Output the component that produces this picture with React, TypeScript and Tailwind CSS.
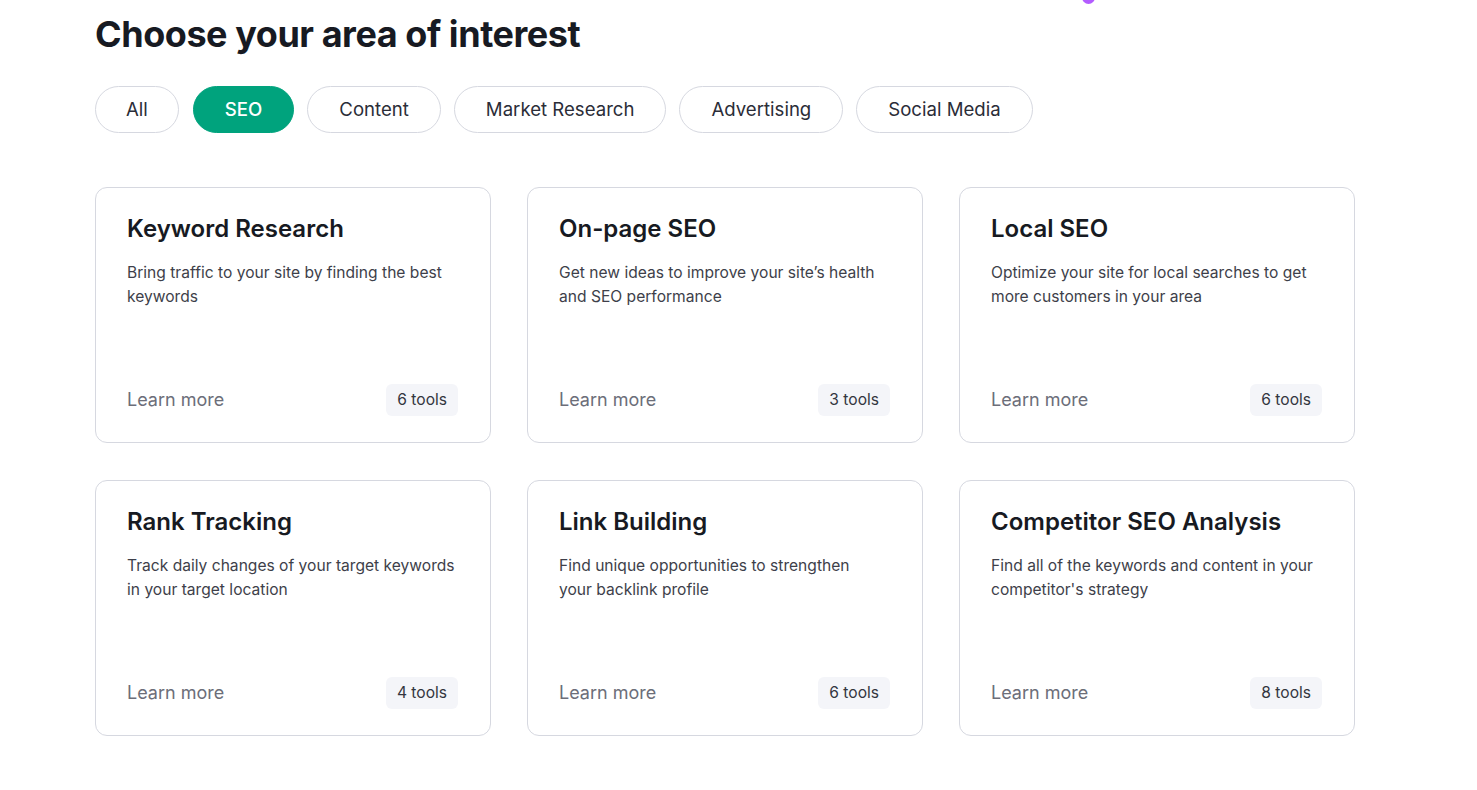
import React from "react";

const FILTERS = ["All", "SEO", "Content", "Market Research", "Advertising", "Social Media"];

const CARDS = [
  { title: "Keyword Research", lines: ["Bring traffic to your site by finding the best", "keywords"], tools: 6 },
  { title: "On-page SEO", lines: ["Get new ideas to improve your site’s health", "and SEO performance"], tools: 3 },
  { title: "Local SEO", lines: ["Optimize your site for local searches to get", "more customers in your area"], tools: 6 },
  { title: "Rank Tracking", lines: ["Track daily changes of your target keywords", "in your target location"], tools: 4 },
  { title: "Link Building", lines: ["Find unique opportunities to strengthen", "your backlink profile"], tools: 6 },
  { title: "Competitor SEO Analysis", lines: ["Find all of the keywords and content in your", "competitor's strategy"], tools: 8 },
];

function AreaCard({ card }: { card: typeof CARDS[0] }) {
  return (
    <div className="flex h-[256px] flex-col rounded-xl border border-[#d6d8e0] bg-white pb-[26px] pl-[31px] pr-8 pt-[25px]">
      {/* Title and description */}
      <h3 className="text-[24px] font-semibold leading-[32px] text-[#171a22]">{card.title}</h3>
      <p className="mt-[16px] whitespace-nowrap text-[15.6px] leading-[24px] text-[#3e3f4a]">
        {card.lines[0]}
        <br />
        {card.lines[1]}
      </p>

      {/* Footer */}
      <div className="mt-auto flex items-center justify-between">
        <span className="text-[18px] leading-[26px] text-[#6c6e79]">Learn more</span>
        <span className="rounded-md bg-[#f4f5f9] px-[11px] py-[4px] text-[15.6px] leading-[24px] text-[#333640]">
          {card.tools} tools
        </span>
      </div>
    </div>
  );
}

export default function App() {
  return (
    <div className="relative min-h-[790px] bg-white font-['Inter','Liberation_Sans',sans-serif]">
      {/* decorative dot peeking in from the top */}
      <div className="absolute left-[1082px] top-[-9px] h-[13px] w-[13px] rounded-full bg-[#b35cff]" />

      <div className="ml-[95px] w-[1260px] pt-[12px]">
        <h2 className="text-[36px] font-bold leading-[44px] tracking-[-0.45px] text-[#171a22]">
          Choose your area of interest
        </h2>

        {/* Filter pills */}
        <div className="mt-[30px] flex gap-[13px]">
          {FILTERS.map((f) => (
            <button
              key={f}
              className={
                f === "SEO"
                  ? "ml-px h-[47px] rounded-full border border-[#00a37d] bg-[#00a37d] px-[31px] text-[18.6px] font-medium text-white"
                  : f === "All"
                  ? "h-[47px] rounded-full border border-[#d6d8e0] bg-white px-[30px] text-[18.6px] text-[#2b2d38]"
                  : "h-[47px] rounded-full border border-[#d6d8e0] bg-white px-[31px] text-[18.6px] text-[#2b2d38]"
              }
            >
              {f}
            </button>
          ))}
        </div>

        {/* Cards */}
        <div className="mt-[54px] grid grid-cols-3 gap-x-[36px] gap-y-[37px]">
          {CARDS.map((c) => (
            <AreaCard key={c.title} card={c} />
          ))}
        </div>
      </div>
    </div>
  );
}
